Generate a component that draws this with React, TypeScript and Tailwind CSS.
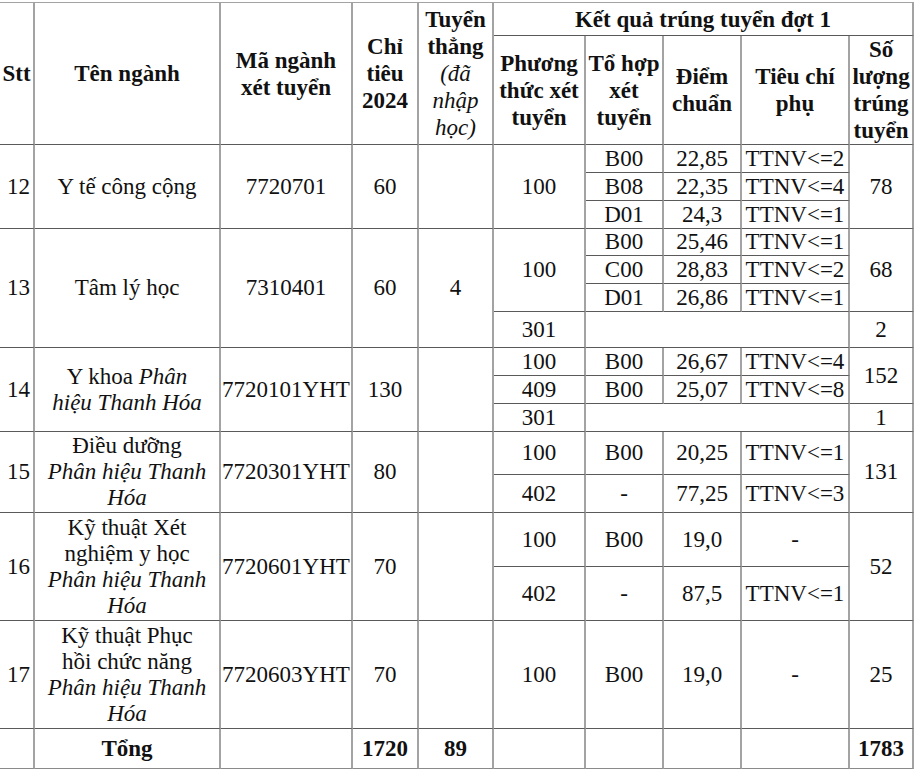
import React from 'react';

type CellProps = React.TdHTMLAttributes<HTMLTableCellElement>;

// ô bảng: viền phải xám 2px, viền dưới 1px
const C: React.FC<CellProps> = ({ children, className = '', ...rest }) => (
  <td
    className={`border-r-2 border-b border-r-[#a3a3a3] border-b-[#5a5a5a] p-0 text-center align-middle ${className}`}
    {...rest}
  >
    {children}
  </td>
);

const H: React.FC<CellProps> = ({ children, className = '', ...rest }) => (
  <C className={`font-bold leading-[27px] whitespace-nowrap ${className}`} {...rest}>
    {children}
  </C>
);

export default function App() {
  return (
    <div className="min-h-[770px] w-[917px] overflow-hidden bg-white font-['Liberation_Serif','Times_New_Roman',serif] text-[#111]">
      <table className="mt-[2px] w-[914px] table-fixed border-separate border-spacing-0 border-t border-t-[#a3a3a3] text-[23px] leading-[26px]">
        <colgroup>
          <col className="w-[35px]" />
          <col className="w-[186px]" />
          <col className="w-[132px]" />
          <col className="w-[66px]" />
          <col className="w-[75px]" />
          <col className="w-[92px]" />
          <col className="w-[78px]" />
          <col className="w-[78px]" />
          <col className="w-[108px]" />
          <col className="w-[64px]" />
        </colgroup>
        <tbody>
          {/* tiêu đề */}
          <tr className="h-[33px]">
            <H rowSpan={2} className="border-b-[#2e2e2e]">Stt</H>
            <H rowSpan={2} className="border-b-[#2e2e2e]">Tên ngành</H>
            <H rowSpan={2} className="border-b-[#2e2e2e]">Mã ngành<br />xét tuyển</H>
            <H rowSpan={2} className="border-b-[#2e2e2e]">Chỉ<br />tiêu<br />2024</H>
            <H rowSpan={2} className="border-b-[#2e2e2e] leading-[26.5px]">
              Tuyển<br />thẳng<br />
              <span className="font-normal italic">(đã<br />nhập<br />học)</span>
            </H>
            <H colSpan={5}>Kết quả trúng tuyển đợt 1</H>
          </tr>
          <tr className="h-[108px]">
            <H className="border-b-[#2e2e2e]">Phương<br />thức xét<br />tuyển</H>
            <H className="border-b-[#2e2e2e]">Tổ hợp<br />xét<br />tuyển</H>
            <H className="border-b-[#2e2e2e]">Điểm<br />chuẩn</H>
            <H className="border-b-[#2e2e2e]">Tiêu chí<br />phụ</H>
            <H className="border-b-[#2e2e2e] leading-[26.5px]">Số<br />lượng<br />trúng<br />tuyển</H>
          </tr>

          {/* 12 */}
          <tr className="h-[28px]">
            <C rowSpan={3} className="pr-[3px] text-right">12</C>
            <C rowSpan={3}>Y tế công cộng</C>
            <C rowSpan={3}>7720701</C>
            <C rowSpan={3}>60</C>
            <C rowSpan={3}></C>
            <C rowSpan={3}>100</C>
            <C>B00</C>
            <C>22,85</C>
            <C>TTNV&lt;=2</C>
            <C rowSpan={3}>78</C>
          </tr>
          <tr className="h-[28px]">
            <C>B08</C>
            <C>22,35</C>
            <C>TTNV&lt;=4</C>
          </tr>
          <tr className="h-[28px]">
            <C>D01</C>
            <C>24,3</C>
            <C>TTNV&lt;=1</C>
          </tr>

          {/* 13 */}
          <tr className="h-[27px]">
            <C rowSpan={4} className="pr-[3px] text-right">13</C>
            <C rowSpan={4}>Tâm lý học</C>
            <C rowSpan={4}>7310401</C>
            <C rowSpan={4}>60</C>
            <C rowSpan={4}>4</C>
            <C rowSpan={3}>100</C>
            <C>B00</C>
            <C>25,46</C>
            <C>TTNV&lt;=1</C>
            <C rowSpan={3}>68</C>
          </tr>
          <tr className="h-[28px]">
            <C>C00</C>
            <C>28,83</C>
            <C>TTNV&lt;=2</C>
          </tr>
          <tr className="h-[28px]">
            <C>D01</C>
            <C>26,86</C>
            <C>TTNV&lt;=1</C>
          </tr>
          <tr className="h-[36px]">
            <C>301</C>
            <C colSpan={3}></C>
            <C>2</C>
          </tr>

          {/* 14 */}
          <tr className="h-[28px]">
            <C rowSpan={3} className="pr-[3px] text-right">14</C>
            <C rowSpan={3}>Y khoa <i>Phân</i><br /><i>hiệu Thanh Hóa</i></C>
            <C rowSpan={3} className="whitespace-nowrap">7720101YHT</C>
            <C rowSpan={3}>130</C>
            <C rowSpan={3}></C>
            <C>100</C>
            <C>B00</C>
            <C>26,67</C>
            <C>TTNV&lt;=4</C>
            <C rowSpan={2}>152</C>
          </tr>
          <tr className="h-[28px]">
            <C>409</C>
            <C>B00</C>
            <C>25,07</C>
            <C>TTNV&lt;=8</C>
          </tr>
          <tr className="h-[28px]">
            <C>301</C>
            <C colSpan={3}></C>
            <C>1</C>
          </tr>

          {/* 15 */}
          <tr className="h-[43px]">
            <C rowSpan={2} className="pr-[3px] text-right">15</C>
            <C rowSpan={2}>Điều dưỡng<br /><i>Phân hiệu Thanh<br />Hóa</i></C>
            <C rowSpan={2} className="whitespace-nowrap">7720301YHT</C>
            <C rowSpan={2}>80</C>
            <C rowSpan={2}></C>
            <C>100</C>
            <C>B00</C>
            <C>20,25</C>
            <C>TTNV&lt;=1</C>
            <C rowSpan={2}>131</C>
          </tr>
          <tr className="h-[38px]">
            <C>402</C>
            <C>-</C>
            <C>77,25</C>
            <C>TTNV&lt;=3</C>
          </tr>

          {/* 16 */}
          <tr className="h-[54px]">
            <C rowSpan={2} className="pr-[3px] text-right">16</C>
            <C rowSpan={2}>Kỹ thuật Xét<br />nghiệm y học<br /><i>Phân hiệu Thanh<br />Hóa</i></C>
            <C rowSpan={2} className="whitespace-nowrap">7720601YHT</C>
            <C rowSpan={2}>70</C>
            <C rowSpan={2}></C>
            <C>100</C>
            <C>B00</C>
            <C>19,0</C>
            <C>-</C>
            <C rowSpan={2}>52</C>
          </tr>
          <tr className="h-[54px]">
            <C>402</C>
            <C>-</C>
            <C>87,5</C>
            <C>TTNV&lt;=1</C>
          </tr>

          {/* 17 */}
          <tr className="h-[108px]">
            <C className="pr-[3px] text-right">17</C>
            <C>Kỹ thuật Phục<br />hồi chức năng<br /><i>Phân hiệu Thanh<br />Hóa</i></C>
            <C className="whitespace-nowrap">7720603YHT</C>
            <C>70</C>
            <C></C>
            <C>100</C>
            <C>B00</C>
            <C>19,0</C>
            <C>-</C>
            <C>25</C>
          </tr>

          {/* tổng */}
          <tr className="h-[40px]">
            <C className="border-b-[#8a8a8a]"></C>
            <C className="border-b-[#8a8a8a] font-bold">Tổng</C>
            <C className="border-b-[#8a8a8a]"></C>
            <C className="border-b-[#8a8a8a] font-bold">1720</C>
            <C className="border-b-[#8a8a8a] font-bold">89</C>
            <C className="border-b-[#8a8a8a]"></C>
            <C className="border-b-[#8a8a8a]"></C>
            <C className="border-b-[#8a8a8a]"></C>
            <C className="border-b-[#8a8a8a]"></C>
            <C className="border-b-[#8a8a8a] font-bold">1783</C>
          </tr>
        </tbody>
      </table>
    </div>
  );
}
